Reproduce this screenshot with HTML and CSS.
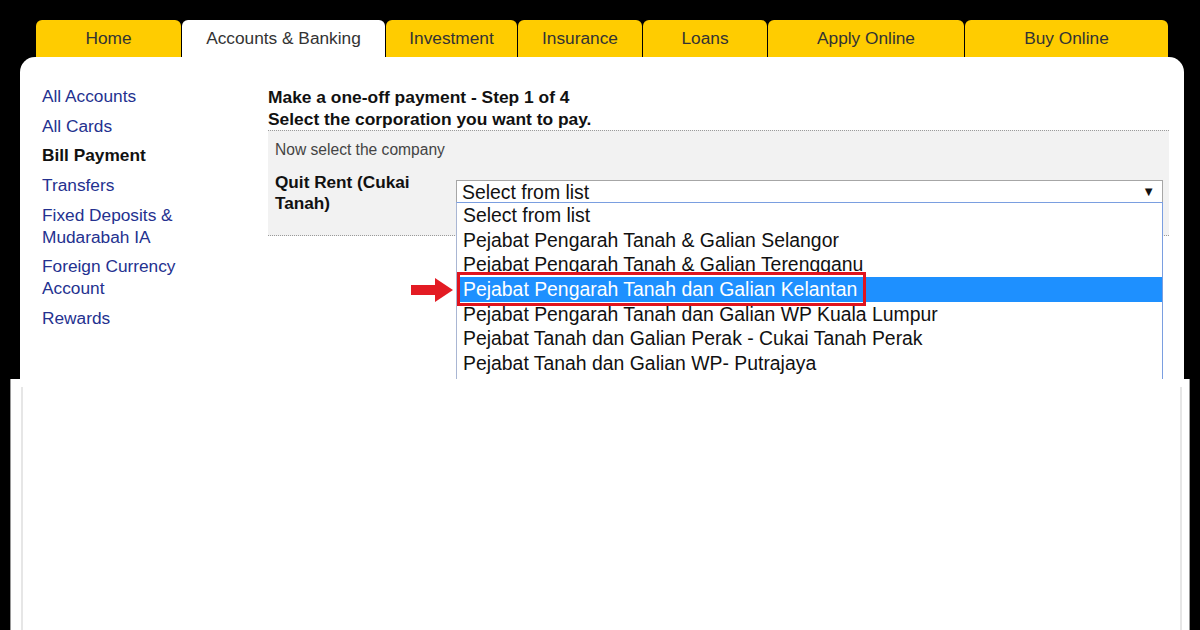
FILE: index.html
```html
<!DOCTYPE html>
<html lang="en">
<head>
<meta charset="utf-8">
<title>Bill Payment</title>
<link rel="stylesheet" href="styles.css">
</head>
<body>
<div class="topbar"></div>
<nav class="tabs">
  <div class="tab w-home">Home</div>
  <div class="tab active w-acc">Accounts &amp; Banking</div>
  <div class="tab w-inv">Investment</div>
  <div class="tab w-ins">Insurance</div>
  <div class="tab w-loan">Loans</div>
  <div class="tab w-apply">Apply Online</div>
  <div class="tab w-buy">Buy Online</div>
</nav>
<div class="panel">
  <ul class="sidenav">
    <li>All Accounts</li>
    <li>All Cards</li>
    <li class="current">Bill Payment</li>
    <li>Transfers</li>
    <li>Fixed Deposits &amp;<br>Mudarabah IA</li>
    <li>Foreign Currency<br>Account</li>
    <li>Rewards</li>
  </ul>
  <main class="content">
    <h1 class="title">Make a one-off payment - Step 1 of 4<br>Select the corporation you want to pay.</h1>
    <section class="formbox">
      <p class="hint">Now select the company</p>
      <div class="row">
        <div class="label">Quit Rent (Cukai Tanah)</div>
        <div class="selectwrap">
          <div class="select">Select from list<span class="caret">▼</span></div>
          <ul class="options">
            <li>Select from list</li>
            <li>Pejabat Pengarah Tanah &amp; Galian Selangor</li>
            <li>Pejabat Pengarah Tanah &amp; Galian Terengganu</li>
            <li class="hl">Pejabat Pengarah Tanah dan Galian Kelantan<span class="redbox"></span>
              <svg class="arrow" width="42" height="24" viewBox="0 0 42 24"><path d="M0 7 H24 V0 L42 12 L24 24 V17 H0 Z" fill="#e31b23"/></svg>
            </li>
            <li>Pejabat Pengarah Tanah dan Galian WP Kuala Lumpur</li>
            <li>Pejabat Tanah dan Galian Perak - Cukai Tanah Perak</li>
            <li>Pejabat Tanah dan Galian WP- Putrajaya</li>
          </ul>
        </div>
      </div>
    </section>
  </main>
</div>
<div class="lower"><div class="lower-inner"></div></div>
</body>
</html>
```
FILE: styles.css
```css
html, body {
  margin: 0;
  padding: 0;
  background: #000;
  font-family: "Liberation Sans", Arial, sans-serif;
  overflow: hidden;
}
.topbar { height: 20px; }
.tabs {
  display: flex;
  margin-left: 36px;
  height: 37px;
  gap: 1px;
}
.tab {
  background: #ffcc00;
  color: #333;
  font-size: 17.3px;
  text-align: center;
  line-height: 36px;
  border-radius: 6px 6px 0 0;
  box-sizing: border-box;
}
.tab.active { background: #fff; }
.w-home { width: 145px; }
.w-acc { width: 203px; }
.w-inv { width: 131px; }
.w-ins { width: 124px; }
.w-loan { width: 124px; }
.w-apply { width: 196px; }
.w-buy { width: 203px; }

.panel {
  margin: 0 16px 0 20px;
  height: 322px;
  background: #fff;
  border-radius: 15px 15px 0 0;
  display: flex;
  overflow: hidden;
  box-sizing: border-box;
  padding-top: 29px;
}
.sidenav {
  list-style: none;
  margin: -1px 0 0;
  padding: 0 0 0 22px;
  width: 226px;
  flex: none;
}
.sidenav li {
  font-size: 17.3px;
  line-height: 22px;
  color: #24318f;
  margin-bottom: 7.7px;
}
.sidenav li.current { color: #111; font-weight: bold; }

.content { flex: none; width: 901px; }
.title {
  margin: 0;
  font-size: 17.4px;
  line-height: 22px;
  font-weight: bold;
  color: #111;
}
.formbox {
  background: #f2f2f2;
  border-top: 1px dotted #9a9a9a;
  border-bottom: 1px dotted #9a9a9a;
  padding: 9px 5px 21px 7px;
}
.hint {
  margin: 0;
  font-size: 15.6px;
  line-height: 20px;
  color: #444;
}
.row {
  display: flex;
  margin-top: 12px;
}
.label {
  width: 165px;
  margin-right: 16px;
  font-size: 17.2px;
  line-height: 21px;
  font-weight: bold;
  color: #111;
}
.selectwrap {
  position: relative;
  width: 707px;
  margin-top: 8px;
  height: 24px;
}
.select {
  box-sizing: border-box;
  height: 24px;
  border: 1px solid #a6a6a6;
  border-bottom-color: #444;
  background: #fff;
  font-size: 19.4px;
  line-height: 22px;
  padding-left: 5px;
  color: #111;
  position: relative;
}
.caret {
  position: absolute;
  right: 7px;
  top: 1px;
  font-size: 13px;
  line-height: 20px;
  color: #111;
}
.options {
  position: absolute;
  left: 0;
  top: 22px;
  width: 707px;
  height: 200px;
  box-sizing: border-box;
  margin: 0;
  padding: 0;
  list-style: none;
  background: #fff;
  border: 1px solid #7a9ee0;
  border-left-color: #a9b6d3;
  z-index: 2;
}
.options li {
  position: relative;
  height: 24.7px;
  line-height: 24.7px;
  font-size: 19.4px;
  color: #111;
  padding-left: 6px;
  white-space: nowrap;
}
.options li.hl {
  background: #1e90ff;
  color: #fff;
}
.redbox {
  position: absolute;
  left: 0;
  top: -5px;
  width: 409px;
  height: 34px;
  box-sizing: border-box;
  border: 3px solid #e0141e;
}
.arrow {
  position: absolute;
  left: -46px;
  top: 1px;
}
.lower {
  margin: 0 10px;
  height: 251px;
  background: #fff;
  border-left: 1px solid #9a9a9a;
  border-right: 1px solid #9a9a9a;
  padding: 8px 7px 0 10px;
  box-sizing: border-box;
}
.lower-inner {
  height: 100%;
  border-left: 2px solid #e6e6e6;
  border-right: 2px solid #e6e6e6;
}
```
